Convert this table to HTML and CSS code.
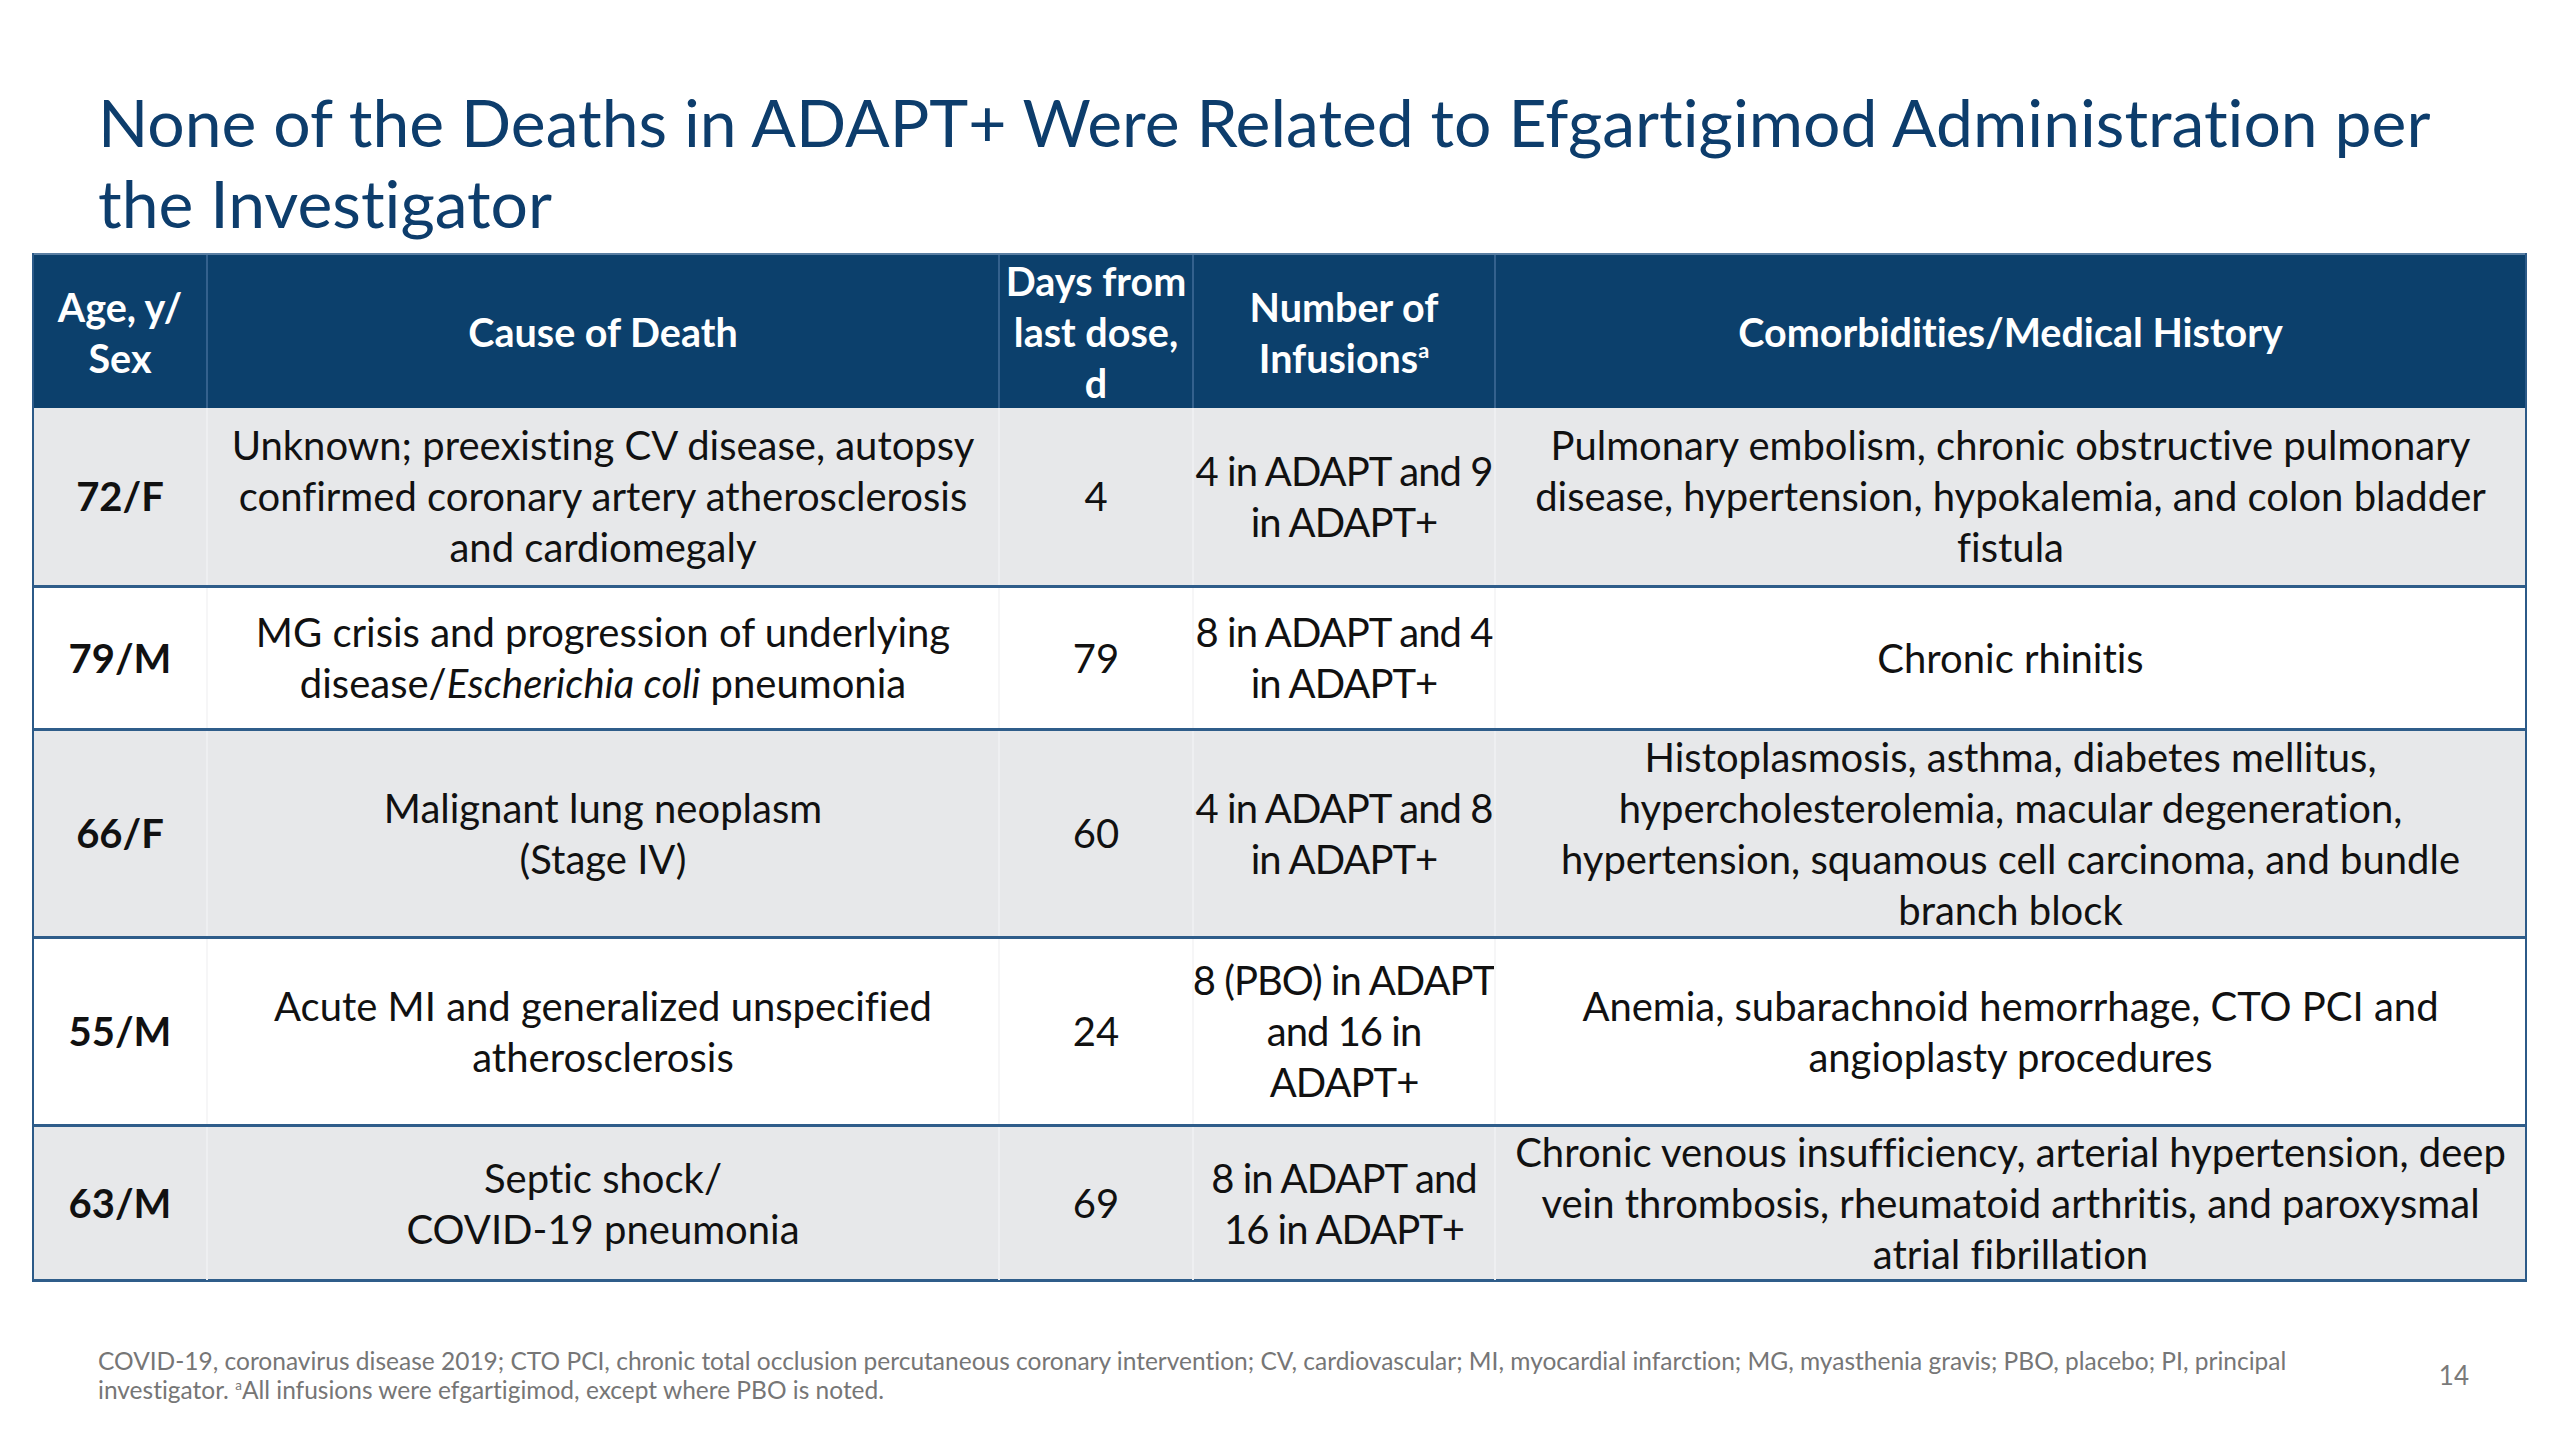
FILE: index.html
```html
<!DOCTYPE html>
<html lang="en">
<head>
<meta charset="utf-8">
<title>Deaths in ADAPT+</title>
<link rel="stylesheet" href="styles.css">
</head>
<body>
<div class="slide">
  <h1 class="title">None of the Deaths in ADAPT+ Were Related to Efgartigimod Administration per<br>the Investigator</h1>

  <div class="table">
    <div class="row head">
      <div class="cell"><div class="t">Age, y/<br>Sex</div></div>
      <div class="cell"><div class="t">Cause of Death</div></div>
      <div class="cell"><div class="t">Days from<br>last dose,<br>d</div></div>
      <div class="cell"><div class="t">Number of<br>Infusions<sup>a</sup></div></div>
      <div class="cell"><div class="t">Comorbidities/Medical History</div></div>
    </div>

    <div class="row shade r1">
      <div class="cell age"><div class="t">72/F</div></div>
      <div class="cell"><div class="t">Unknown; preexisting CV disease, autopsy<br>confirmed coronary artery atherosclerosis<br>and cardiomegaly</div></div>
      <div class="cell"><div class="t">4</div></div>
      <div class="cell inf"><div class="t">4 in ADAPT and 9<br>in ADAPT+</div></div>
      <div class="cell"><div class="t">Pulmonary embolism, chronic obstructive pulmonary<br>disease, hypertension, hypokalemia, and colon bladder<br>fistula</div></div>
    </div>

    <div class="row plain r2">
      <div class="cell age"><div class="t">79/M</div></div>
      <div class="cell"><div class="t">MG crisis and progression of underlying<br>disease/<em>Escherichia coli</em> pneumonia</div></div>
      <div class="cell"><div class="t">79</div></div>
      <div class="cell inf"><div class="t">8 in ADAPT and 4<br>in ADAPT+</div></div>
      <div class="cell"><div class="t">Chronic rhinitis</div></div>
    </div>

    <div class="row shade r3">
      <div class="cell age"><div class="t">66/F</div></div>
      <div class="cell"><div class="t">Malignant lung neoplasm<br>(Stage IV)</div></div>
      <div class="cell"><div class="t">60</div></div>
      <div class="cell inf"><div class="t">4 in ADAPT and 8<br>in ADAPT+</div></div>
      <div class="cell"><div class="t">Histoplasmosis, asthma, diabetes mellitus,<br>hypercholesterolemia, macular degeneration,<br>hypertension, squamous cell carcinoma, and bundle<br>branch block</div></div>
    </div>

    <div class="row plain r4">
      <div class="cell age"><div class="t">55/M</div></div>
      <div class="cell"><div class="t">Acute MI and generalized unspecified<br>atherosclerosis</div></div>
      <div class="cell"><div class="t">24</div></div>
      <div class="cell inf"><div class="t">8 (PBO) in ADAPT<br>and 16 in<br>ADAPT+</div></div>
      <div class="cell"><div class="t">Anemia, subarachnoid hemorrhage, CTO PCI and<br>angioplasty procedures</div></div>
    </div>

    <div class="row shade r5">
      <div class="cell age"><div class="t">63/M</div></div>
      <div class="cell"><div class="t">Septic shock/<br>COVID-19 pneumonia</div></div>
      <div class="cell"><div class="t">69</div></div>
      <div class="cell inf"><div class="t">8 in ADAPT and<br>16 in ADAPT+</div></div>
      <div class="cell"><div class="t">Chronic venous insufficiency, arterial hypertension, deep<br>vein thrombosis, rheumatoid arthritis, and paroxysmal<br>atrial fibrillation</div></div>
    </div>
  </div>

  <div class="foot">
    <p class="note">COVID-19, coronavirus disease 2019; CTO PCI, chronic total occlusion percutaneous coronary intervention; CV, cardiovascular; MI, myocardial infarction; MG, myasthenia gravis; PBO, placebo; PI, principal<br>investigator. <sup>a</sup>All infusions were efgartigimod, except where PBO is noted.</p>
    <span class="page">14</span>
  </div>
</div>
</body>
</html>
```

FILE: styles.css
```css
* { box-sizing: border-box; }

html, body {
  margin: 0;
  padding: 0;
  background: #ffffff;
}

.slide {
  width: 2560px;
  height: 1440px;
  overflow: hidden;
  background: #ffffff;
  font-family: "Lato", "Open Sans", sans-serif;
  font-variant-ligatures: none;
  display: flex;
  flex-direction: column;
}

.title {
  margin: 81px 0 0 98px;
  font-size: 66px;
  line-height: 81px;
  font-weight: 400;
  color: #0d3d6c;
  white-space: nowrap;
}

.table {
  margin: 10px 0 0 32px;
  width: 2495px;
  border-left: 2px solid #2c5a88;
  border-right: 2px solid #2c5a88;
  font-size: 40px;
  line-height: 51px;
  color: #111111;
}

.row {
  display: grid;
  grid-template-columns: 172px 792px 194px 302px 1031px;
  border-bottom: 3px solid #2f5d8a;
}

.cell {
  display: flex;
  align-items: center;
  justify-content: center;
  text-align: center;
  white-space: nowrap;
  border-left: 2px solid transparent;
}

.cell:first-child { border-left: none; }

.inf { letter-spacing: -1px; }

.head {
  height: 155px;
  background: #0c406c;
  color: #ffffff;
  font-weight: 700;
  font-size: 39.5px;
  border-top: 2px solid #5b7fa3;
  border-bottom: none;
}

.head .cell { border-left-color: #34618d; }

.head sup, .note sup {
  font-size: 0.55em;
  line-height: 0;
  vertical-align: 0.7em;
}

.shade { background: #e7e8ea; }
.shade .cell { border-left-color: #eeeff1; }
.plain { background: #ffffff; }
.plain .cell { border-left-color: #f6f6f7; }

.r1 { height: 180px; }
.r2 { height: 143px; }
.r3 { height: 208px; }
.r4 { height: 188px; }
.r5 { height: 155px; }

.age { font-weight: 700; }

.foot {
  margin-top: 64px;
  display: flex;
  align-items: center;
  justify-content: space-between;
  padding: 0 91px 0 98px;
}

.note {
  margin: 0;
  font-size: 24.5px;
  line-height: 29px;
  color: #767676;
}

.page {
  font-size: 26px;
  color: #7a7a7a;
}
```
